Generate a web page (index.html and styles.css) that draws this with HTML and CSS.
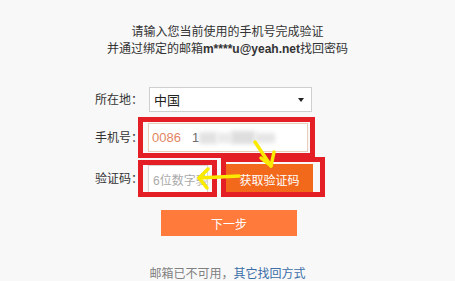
FILE: index.html
```html
<!DOCTYPE html>
<html lang="zh-CN">
<head>
<meta charset="utf-8">
<title>找回密码</title>
<link rel="stylesheet" href="styles.css">
</head>
<body>
<div class="page">
  <div class="intro">
    <p class="line">请输入您当前使用的手机号完成验证</p>
    <p class="line">并通过绑定的邮箱<b class="mail">m****u@yeah.net</b>找回密码</p>
  </div>
  <div class="form">
    <div class="row row-region">
      <span class="label">所在地：</span>
      <div class="select"><span>中国</span><i class="caret"></i></div>
    </div>
    <div class="row row-phone">
      <span class="label">手机号：</span>
      <div class="input phone"><span class="code">0086</span><span class="num">1</span><span class="mask"><i class="b1"></i><i class="b2"></i><i class="b3"></i><i class="b4"></i></span></div>
    </div>
    <div class="row row-code">
      <span class="label">验证码：</span>
      <div class="input vcode"><span class="ph">6位数字验证码</span></div>
      <button class="getcode">获取验证码</button>
    </div>
    <div class="row row-next">
      <button class="next">下一步</button>
    </div>
  </div>
  <p class="footer">邮箱已不可用，<a class="link">其它找回方式</a></p>

  <svg class="overlay" width="455" height="281" viewBox="0 0 455 281">
    <g fill="none" stroke="#e31e24" stroke-width="5">
      <rect x="140.5" y="119.5" width="172" height="36"/>
      <rect x="140.5" y="162.5" width="74" height="32"/>
      <rect x="223.5" y="159.5" width="99" height="35"/>
    </g>
    <g fill="none" stroke="#f9ea00" stroke-width="3.5" stroke-linecap="round" stroke-linejoin="round">
      <path d="M255 142 L271 166"/>
      <path d="M261 158 L271 166 L274 152"/>
      <path d="M239 176 L199 178"/>
      <path d="M208 169 L199 178 L207 188"/>
    </g>
  </svg>
</div>
</body>
</html>
```

FILE: styles.css
```css
html, body {
  margin: 0;
  padding: 0;
  background: #f8f8f8;
}
body {
  font-family: "Liberation Sans", "Noto Sans CJK SC", sans-serif;
  font-size: 12px;
  color: #333;
}
.page {
  position: relative;
  width: 455px;
  height: 281px;
  overflow: hidden;
}
.intro {
  padding-top: 24px;
  text-align: center;
}
.line {
  margin: 0;
  line-height: 17px;
}
.mail {
  font-weight: bold;
}
.form {
  margin-top: 29px;
  margin-left: 95px;
  display: flex;
  flex-direction: column;
}
.row {
  display: flex;
  align-items: center;
}
.label {
  width: 53px;
  flex: none;
  line-height: 16px;
}
.select {
  height: 23px;
  border: 1px solid #cfcfcf;
  background: #fff;
  margin-left: 1px;
  display: flex;
  align-items: center;
  justify-content: space-between;
  padding: 0 7px 0 4px;
  box-sizing: content-box;
  width: 150px;
  font-size: 13px;
  color: #222;
}
.caret {
  width: 0;
  height: 0;
  border-top: 4px solid #222;
  border-left: 3px solid transparent;
  border-right: 3px solid transparent;
}
.row-phone {
  margin-top: 11px;
}
.input {
  background: #fff;
  border: 1px solid #d6d6d6;
  box-sizing: border-box;
  display: flex;
  align-items: center;
  overflow: hidden;
  white-space: nowrap;
}
.phone {
  width: 160px;
  height: 29px;
  border-color: #e9cdbb;
  padding-left: 3px;
}
.code {
  color: #e2855f;
  font-size: 13px;
}
.num {
  color: #666;
  font-size: 13px;
  margin-left: 11px;
}
.mask {
  display: flex;
  align-items: center;
  height: 16px;
}
.mask i {
  display: block;
  background: #d9d9d9;
  filter: blur(2px);
}
.mask .b1 { width: 18px; height: 12px; background: #e2e2e2; }
.mask .b2 { width: 14px; height: 10px; background: #eaeaea; }
.mask .b3 { width: 24px; height: 13px; background: #dedede; }
.mask .b4 { width: 20px; height: 10px; background: #e6e6e6; }
.row-code {
  margin-top: 12px;
}
.vcode {
  width: 60px;
  height: 28px;
  padding-left: 4px;
}
.ph {
  color: #aaa;
}
.getcode {
  margin-left: 18px;
  width: 87px;
  height: 30px;
  border: none;
  background: #f2691c;
  color: #fff;
  font-family: inherit;
  font-size: 12px;
  padding: 0;
}
.row-next {
  margin-top: 16px;
}
.next {
  margin-left: 66px;
  width: 136px;
  height: 26px;
  border: none;
  background: #ff7a3b;
  color: #fff;
  font-family: inherit;
  font-size: 12px;
  padding: 0;
}
.footer {
  margin: 30px 0 0 0;
  text-align: center;
  color: #808080;
  line-height: 16px;
}
.link {
  color: #3b6ea8;
}
.overlay {
  position: absolute;
  left: 0;
  top: 0;
  pointer-events: none;
}
```
